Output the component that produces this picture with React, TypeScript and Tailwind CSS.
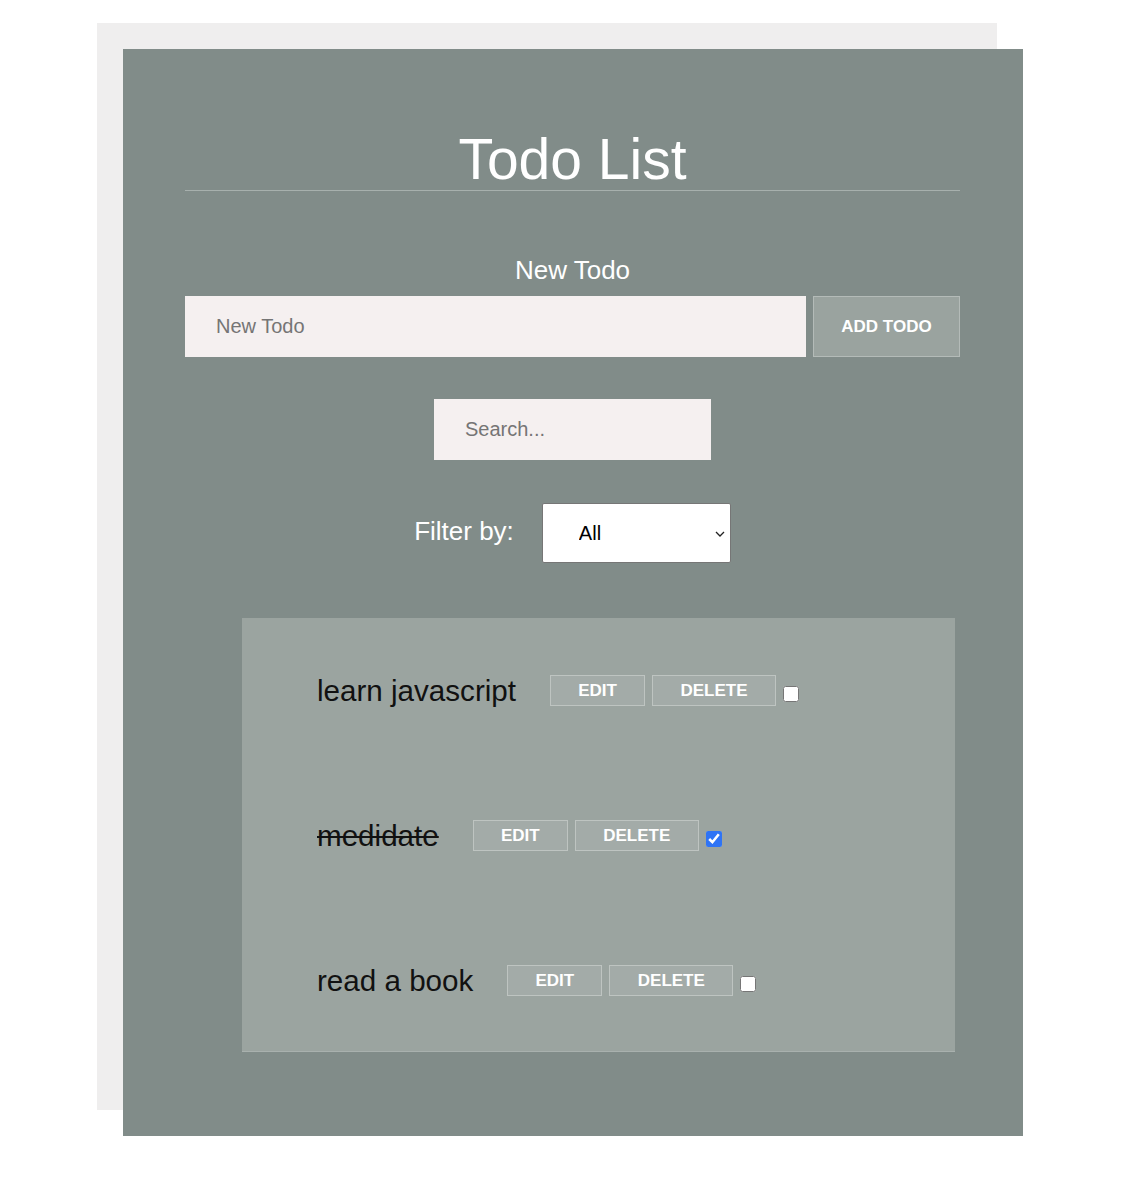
import React, { useState } from 'react';

interface Todo {
  id: number;
  text: string;
  done: boolean;
}

const initialTodos: Todo[] = [
  { id: 1, text: 'learn javascript', done: false },
  { id: 2, text: 'medidate', done: true },
  { id: 3, text: 'read a book', done: false },
];

const font = { fontFamily: '"Liberation Sans", Arial, Helvetica, sans-serif' };

export default function App() {
  const [todos, setTodos] = useState<Todo[]>(initialTodos);
  const [newTodo, setNewTodo] = useState('');
  const [search, setSearch] = useState('');
  const [filter, setFilter] = useState('all');

  const toggle = (id: number) =>
    setTodos(todos.map((t) => (t.id === id ? { ...t, done: !t.done } : t)));

  return (
    <div className="min-h-[1200px] bg-white pt-[49px] pl-[123px]" style={font}>
      <div className="w-[900px] bg-[#818c89] shadow-[-26px_-26px_0_0_#efeeee] pt-[83px] pb-[84px] pl-[62px] pr-[63px]">
        <h1 className="text-center text-white text-[57px] leading-[55px] pb-[3px] border-b border-[#a7b0ad]">
          Todo List
        </h1>

        {/* New todo */}
        <div className="mt-[66px] text-center text-white text-[26px] leading-[26px]">New Todo</div>
        <div className="mt-[13px] flex gap-[7px]">
          <input
            value={newTodo}
            onChange={(e) => setNewTodo(e.target.value)}
            placeholder="New Todo"
            className="w-[621px] h-[61px] bg-[#f5f0f0] pl-[31px] text-[20px] text-[#222] placeholder:text-[#757575] outline-none"
          />
          <button className="w-[147px] h-[61px] bg-[#9aa39f] border border-[#b4bbb8] text-white font-bold text-[17px]">
            ADD TODO
          </button>
        </div>

        {/* Search */}
        <div className="mt-[42px] flex justify-center">
          <input
            value={search}
            onChange={(e) => setSearch(e.target.value)}
            placeholder="Search..."
            className="w-[277px] h-[61px] bg-[#f5f0f0] pl-[31px] text-[20px] text-[#222] placeholder:text-[#757575] outline-none"
          />
        </div>

        {/* Filter */}
        <div className="mt-[43px] flex justify-center items-center gap-[28px]">
          <span className="text-white text-[26px] -mt-[3px]">Filter by:</span>
          <div className="relative w-[189px] h-[60px]">
            <select
              value={filter}
              onChange={(e) => setFilter(e.target.value)}
              className="appearance-none w-full h-full bg-white border border-[#767676] rounded-[2px] pl-[36px] text-[20px] text-black outline-none"
            >
              <option value="all">All</option>
              <option value="done">Completed</option>
              <option value="open">Incomplete</option>
            </select>
            <svg
              className="absolute right-[6px] top-[28px] pointer-events-none"
              width="10"
              height="6"
              viewBox="0 0 10 6"
              fill="none"
            >
              <path d="M1 1l4 4 4-4" stroke="#222" strokeWidth="1.3" />
            </svg>
          </div>
        </div>

        {/* List */}
        <div className="mt-[55px] ml-[57px] w-[713px] h-[434px] bg-[#9ba4a0] border-b border-[#a9b1ae] pt-[57px] pl-[75px] flex flex-col gap-[114px]">
          {todos.map((todo) => (
            <div key={todo.id} className="flex items-center h-[31px]">
              <span className={`text-[29.6px] leading-none text-[#111] ${todo.done ? 'line-through' : ''}`}>
                {todo.text}
              </span>
              <button className="ml-[34px] w-[95px] h-[31px] bg-[#a3aba8] border border-[#bec4c1] text-white font-bold text-[17px]">
                EDIT
              </button>
              <button className="ml-[7px] w-[124px] h-[31px] bg-[#a3aba8] border border-[#bec4c1] text-white font-bold text-[17px]">
                DELETE
              </button>
              <input
                type="checkbox"
                checked={todo.done}
                onChange={() => toggle(todo.id)}
                className="w-[16px] h-[16px] mr-0 mb-0 ml-[7px] mt-[6px] accent-[#2f74f5]"
              />
            </div>
          ))}
        </div>
      </div>
    </div>
  );
}
